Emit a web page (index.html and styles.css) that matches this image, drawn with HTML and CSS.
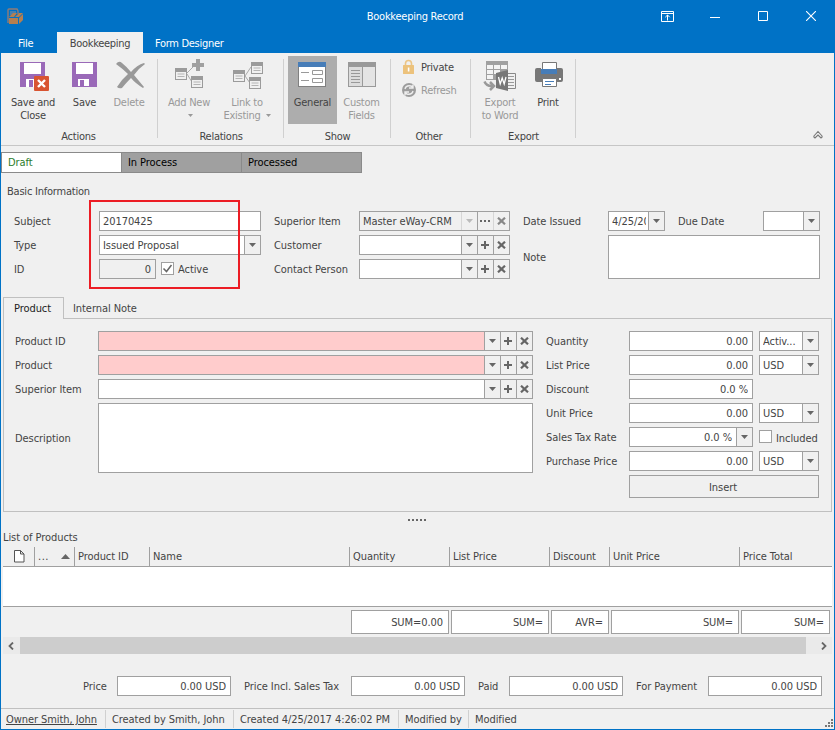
FILE: index.html
```html
<!DOCTYPE html>
<html lang="en">
<head>
<meta charset="utf-8">
<title>Bookkeeping Record</title>
<link rel="stylesheet" href="styles.css">
</head>
<body>
<svg class="defs" width="0" height="0">
  <symbol id="down" viewBox="0 0 7 4"><path d="M0 0h7L3.5 4z" fill="currentColor"/></symbol>
  <symbol id="plus" viewBox="0 0 9 8"><path d="M4 0v8M0 4h8" stroke="currentColor" stroke-width="2"/></symbol>
  <symbol id="cross" viewBox="0 0 9 8"><path d="M1 .7l7 6.600M8 .7l-7 6.600" stroke="currentColor" stroke-width="2.200"/></symbol>
  <symbol id="dots" viewBox="0 0 11 2"><path d="M0 0h2v2H0zM4 0h2v2h-2zM8 0h2v2H8z" fill="currentColor"/></symbol>
  <symbol id="win" viewBox="0 0 13 13"><path d="M0 0h12v12H0z" fill="#9b9b9b"/><path d="M1 4h10v7H1z" fill="#f0f0f0"/><path d="M2.500 6h7M2.500 8.500h7" stroke="#b4b4b4"/></symbol>
</svg>
<div class="window">
  <header class="titlebar">
    <svg class="app" width="18" height="18" viewBox="6 7 18 18"><path d="M8 23V10q0-1 1-1h8l1 2v3" fill="none" stroke="#8f7c78" stroke-width="1.400"/><path d="M10 12h6M10 14h4" stroke="#5f86a8" stroke-width="1.500"/><path d="M9 17l4-4h4l-3 4zM15 17l4-4h4l-4 4zM9 18h9v6H9zM19 18l4-4v6l-4 4z" fill="#b57f50"/></svg>
    <h1>Bookkeeping Record</h1>
    <div class="controls">
      <svg width="13" height="11" viewBox="0 0 13 11" fill="none" stroke="#fff"><path d="M.5.5h12v10H.5zM.5 2.500h12M6.500 9.500V4M4.300 6.200L6.500 4l2.200 2.200"/></svg>
      <svg width="10" height="11" viewBox="0 0 10 11"><path d="M0 6.500h10" stroke="#fff"/></svg>
      <svg width="10" height="10" viewBox="0 0 10 10"><path d="M.5.5h9v9h-9z" stroke="#fff" fill="none"/></svg>
      <svg width="10" height="10" viewBox="0 0 10 10"><path d="M0 0l10 10M10 0L0 10" stroke="#fff" stroke-width="1.100"/></svg>
    </div>
  </header>
  <nav class="tabs"><a class="file">File</a><a class="on">Bookkeeping</a><a class="designer">Form Designer</a></nav>

  <section class="ribbon">
    <div class="group actions">
      <div class="tools">
        <div class="tool w60"><svg viewBox="17 59 34 34"><path d="M21 62h25v25H21z" fill="#9a69b8"/><path d="M25 63h17v11H25zM27 79h13v8H27z" fill="#fff"/><path d="M30 80h4v7h-4z" fill="#9a69b8"/><rect x="35" y="76" width="15" height="15" rx="1" fill="#d85431"/><path d="M39 80l7 7M46 80l-7 7" stroke="#fff" stroke-width="2.400"/></svg><span>Save and</span><span>Close</span></div>
        <div class="tool w43"><svg viewBox="69 59 34 34"><path d="M73 62h25v25H73z" fill="#9a69b8"/><path d="M77 63h17v11H77zM79 79h11v7H79z" fill="#fff"/><path d="M81 80h4v6h-4z" fill="#9a69b8"/></svg><span>Save</span></div>
        <div class="tool w46 off"><svg viewBox="113 59 34 34"><path d="M117 64q3-4 6-1 5 4 9 9 6-7 13-9l1 1q-6 4-11 11 5 6 10 12l-1 1q-8-5-12-10-5 5-9 10-3 1-5-1 4-7 11-13-5-5-12-10z" fill="#999"/></svg><span>Delete</span></div>
      </div><div class="caption">Actions</div>
    </div>
    <div class="group relations">
      <div class="tools">
        <div class="tool w54 off"><svg viewBox="172 59 34 34"><path d="M187 73l7-7M187 74l5 8" stroke="#aaa"/><path d="M196 59h4v4h4v4h-4v4h-4v-4h-4v-4h4z" fill="#a0a0a0"/><use href="#win" x="175" y="68" width="13" height="13"/><use href="#win" x="191" y="76" width="13" height="13"/></svg><span>Add New</span><span><svg class="tri"><use href="#down"/></svg></span></div>
        <div class="tool w62 off"><svg viewBox="230 59 34 34"><path d="M245 76l6-9M245 76l5 7" stroke="#aaa"/><use href="#win" x="233" y="70" width="13" height="13"/><use href="#win" x="251" y="62" width="13" height="13"/><use href="#win" x="249" y="77" width="13" height="13"/></svg><span>Link to</span><span>Existing <svg class="tri"><use href="#down"/></svg></span></div>
      </div><div class="caption">Relations</div>
    </div>
    <div class="group show">
      <div class="tools">
        <div class="tool w49 selected"><svg viewBox="296 59 34 34"><path d="M298 62h28v25h-28z" fill="#808080"/><path d="M298 62h28v5h-28z" fill="#477db8"/><path d="M299 67h26v19h-26z" fill="#fff"/><path d="M301 72.500h8M301 80.500h8" stroke="#999"/><path d="M312.500 70.500h10v4h-10zM312.500 78.500h10v4h-10z" fill="none" stroke="#999"/></svg><span>General</span></div>
        <div class="tool w49 off"><svg viewBox="345 59 34 34"><path d="M348 62h28v25h-28z" fill="#999"/><path d="M349 67h13v19h-13z" fill="#dcdcdc"/><path d="M363 67h12v19h-12z" fill="#e4e4e4"/><path d="M351 70.500h9M351 73.500h9M351 76.500h9M351 79.500h9M351 82.500h9" stroke="#999"/></svg><span>Custom</span><span>Fields</span></div>
      </div><div class="caption">Show</div>
    </div>
    <div class="group other">
      <div class="tools list">
        <div class="item"><svg width="16" height="16" viewBox="400 59 16 16"><path d="M405.500 66v-2.500a3 3 0 0 1 6 0V66" fill="none" stroke="#ecc585" stroke-width="1.600"/><rect x="403" y="65" width="11" height="9" rx=".5" fill="#ecc27c"/><path d="M407.800 67.500h1.600v4h-1.600z" fill="#fff"/></svg>Private</div>
        <div class="item off"><svg width="16" height="16" viewBox="400 82 16 16"><circle cx="409" cy="90" r="7" fill="#9d9d9d"/><path d="M405 89q1-4 6-3l2 1M413 91q-1 4-6 3l-2-1M413 84.500v3.500h-4M405 95.500V92h4" stroke="#eee" stroke-width="1.400" fill="none"/></svg>Refresh</div>
      </div><div class="caption">Other</div>
    </div>
    <div class="group export">
      <div class="tools">
        <div class="tool w50 off"><svg viewBox="483 59 34 34"><path d="M486 61h22v19h-22z" fill="#a0a0a0"/><path d="M487 65h6v4h-6zM494 65h6v4h-6zM501 65h6v4h-6zM487 70h6v4h-6zM494 70h6v4h-6zM487 75h6v4h-6z" fill="#f4f4f4"/><path d="M506.500 73.500h9v15h-9z" fill="#f0f0f0" stroke="#888"/><path d="M508 76.500h6M508 79.500h6M508 82.500h6M508 85.500h6" stroke="#999"/><path d="M496 73l12-3v21l-12-3z" fill="#777"/><path d="M498.500 77l1.700 7 2-6 2 6 1.800-7" fill="none" stroke="#fff" stroke-width="1.300"/><path d="M484.500 81.500q2 5 8 4.500M490 82l4 4-4 4" fill="none" stroke="#999" stroke-width="2.500"/></svg><span>Export</span><span>to Word</span></div>
        <div class="tool w46"><svg viewBox="531 59 34 34"><path d="M542.500 62.500h14v10h-14z" fill="#fff" stroke="#777"/><path d="M535 70q0-2 2-2h4v6h16v-6h4q2 0 2 2v10q0 2-2 2h-24q-2 0-2-2z" fill="#777"/><path d="M541 69h16v5h-16z" fill="#477db8"/><path d="M559 78h2v2h-2z" fill="#fff"/><path d="M542.500 78.500h14v8h-14z" fill="#fff" stroke="#777"/><path d="M545 81.500h9M545 84.500h6" stroke="#477db8"/></svg><span>Print</span></div>
      </div><div class="caption">Export</div>
    </div>
    <svg class="collapse" width="12" height="9" viewBox="0 0 12 9"><path d="M1.500 6.500L6 1.500l4.500 5M10.500 6.500L9 8 6 5 3 8 1.500 6.500" fill="none" stroke="#777" stroke-width="1.100"/></svg>
  </section>

  <div class="steps"><div class="now">Draft</div><div>In Process</div><div>Processed</div></div>

  <section class="basic">
    <h2>Basic Information</h2>
    <div class="basicgrid">
      <div class="col c1">
        <label>Subject</label><div class="field"><span>20170425</span></div>
        <label>Type</label><div class="field"><span>Issued Proposal</span><b><svg class="d"><use href="#down"/></svg></b></div>
        <label>ID</label><div class="idrow"><div class="field ro num"><span>0</span></div><i class="check"><svg width="11" height="11" viewBox="0 0 11 11"><path d="M1.500 5.500l3 3 5-6.500" fill="none" stroke="#666" stroke-width="1.500"/></svg></i>Active</div>
      </div>
      <div class="col c2">
        <label>Superior Item</label><div class="field ro"><span>Master eWay-CRM</span><b class="soft"><svg class="d"><use href="#down"/></svg></b><b><svg class="e"><use href="#dots"/></svg></b><b class="faded"><svg class="p"><use href="#cross"/></svg></b></div>
        <label>Customer</label><div class="field"><span></span><b><svg class="d"><use href="#down"/></svg></b><b><svg class="p"><use href="#plus"/></svg></b><b><svg class="p"><use href="#cross"/></svg></b></div>
        <label>Contact Person</label><div class="field"><span></span><b><svg class="d"><use href="#down"/></svg></b><b><svg class="p"><use href="#plus"/></svg></b><b><svg class="p"><use href="#cross"/></svg></b></div>
      </div>
      <div class="col c3">
        <label>Date Issued</label><div class="field"><span>4/25/2017</span><b><svg class="d"><use href="#down"/></svg></b></div><label class="due">Due Date</label><div class="field"><span></span><b><svg class="d"><use href="#down"/></svg></b></div>
        <label class="notelabel">Note</label><div class="area note"></div>
      </div>
    </div>
    <div class="mark"></div>
  </section>

  <div class="pagetabs"><div class="active">Product</div><div class="rest">Internal Note</div></div>
  <section class="panel">
    <div class="col p1">
      <label>Product ID</label><div class="field req"><span></span><b><svg class="d"><use href="#down"/></svg></b><b><svg class="p"><use href="#plus"/></svg></b><b><svg class="p"><use href="#cross"/></svg></b></div>
      <label>Product</label><div class="field req"><span></span><b><svg class="d"><use href="#down"/></svg></b><b><svg class="p"><use href="#plus"/></svg></b><b><svg class="p"><use href="#cross"/></svg></b></div>
      <label>Superior Item</label><div class="field"><span></span><b><svg class="d"><use href="#down"/></svg></b><b><svg class="p"><use href="#plus"/></svg></b><b><svg class="p"><use href="#cross"/></svg></b></div>
      <label class="desc">Description</label><div class="area"></div>
    </div>
    <div class="col p2">
      <label>Quantity</label><div class="field num"><span>0.00</span></div><div class="field"><span>Activ...</span><b><svg class="d"><use href="#down"/></svg></b></div>
      <label>List Price</label><div class="field num"><span>0.00</span></div><div class="field"><span>USD</span><b><svg class="d"><use href="#down"/></svg></b></div>
      <label>Discount</label><div class="field num"><span>0.0 %</span></div><div></div>
      <label>Unit Price</label><div class="field num"><span>0.00</span></div><div class="field"><span>USD</span><b><svg class="d"><use href="#down"/></svg></b></div>
      <label>Sales Tax Rate</label><div class="field num"><span>0.0 %</span><b><svg class="d"><use href="#down"/></svg></b></div><div class="incl"><i class="check"></i><span>Included</span></div>
      <label>Purchase Price</label><div class="field num"><span>0.00</span></div><div class="field"><span>USD</span><b><svg class="d"><use href="#down"/></svg></b></div>
      <button>Insert</button>
    </div>
  </section>
  <div class="splitter"><i></i><i></i><i></i><i></i><i></i></div>

  <section class="products">
    <h2>List of Products</h2>
    <div class="cols"><div><svg class="doc" width="11" height="13" viewBox="0 0 11 13"><path d="M.5.5h6l3.500 3.500v8H.5zM6.500.5V4H10" fill="#fff" stroke="#555"/></svg></div><div class="sort">...<svg width="9" height="5" viewBox="0 0 9 5"><path d="M0 5h9L4.500 0z" fill="#666"/></svg></div><div>Product ID</div><div>Name</div><div>Quantity</div><div>List Price</div><div>Discount</div><div>Unit Price</div><div>Price Total</div></div>
    <div class="rows"></div>
    <div class="sums"><div>SUM=0.00</div><div>SUM=</div><div>AVR=</div><div>SUM=</div><div>SUM=</div></div>
    <div class="scroll"><svg width="6" height="8" viewBox="0 0 6 8"><path d="M5 .5L1.500 4 5 7.500" fill="none" stroke="#666" stroke-width="1.800"/></svg><i></i><svg width="6" height="8" viewBox="0 0 6 8"><path d="M1 .5L4.500 4 1 7.500" fill="none" stroke="#666" stroke-width="1.800"/></svg></div>
  </section>

  <section class="totals">
    <label>Price</label><div class="field num"><span>0.00 USD</span></div>
    <label>Price Incl. Sales Tax</label><div class="field num"><span>0.00 USD</span></div>
    <label>Paid</label><div class="field num"><span>0.00 USD</span></div>
    <label>For Payment</label><div class="field num"><span>0.00 USD</span></div>
  </section>
  <footer>
    <div><u>Owner Smith, John</u></div><div>Created by Smith, John</div><div>Created 4/25/2017 4:26:02 PM</div><div>Modified by</div><div>Modified</div>
    <svg width="8" height="8" viewBox="0 0 8 8"><path d="M6 0h2v2H6zM3 3h2v2H3zM6 3h2v2H6zM0 6h2v2H0zM3 6h2v2H3zM6 6h2v2H6z" fill="#777"/></svg>
  </footer>
</div>
</body>
</html>
```

FILE: styles.css
```css
* { box-sizing: border-box; }
body { margin: 0; font: 11px/14px "DejaVu Sans Condensed", "DejaVu Sans", sans-serif; font-stretch: condensed; letter-spacing: -0.07px; color: #444; }
h1, h2 { margin: 0; font-size: 11px; font-weight: normal; }
svg { display: block; }
i, b { font-style: normal; font-weight: normal; }
.defs { position: absolute; }
.window { width: 835px; height: 730px; background: #f0f0f0; border: 1px solid #0072c6; border-top: 0; overflow: hidden; }

.titlebar { height: 32px; background: #0072c6; color: #fff; display: grid; grid-template-columns: 190px 1fr 190px; align-items: center; letter-spacing: -0.25px; }
.titlebar h1 { text-align: center; padding: 2px 5px 0 0; }
.app { margin-left: 5px; }
.controls { display: grid; grid-template-columns: 49px 48px 48px 10px; align-items: center; padding-left: 17px; }
.tabs { height: 21px; background: #0072c6; color: #fff; display: flex; line-height: 24px; letter-spacing: -0.3px; }
.tabs .file { width: 56px; padding-left: 17px; line-height: 23px; }
.tabs .on { width: 86px; text-align: center; background: #f0f0f0; color: #444; }
.designer { padding-left: 12px; }

.ribbon { height: 93px; border-bottom: 1px solid #c6c6c6; display: flex; letter-spacing: -0.25px; }
.group { padding-top: 3px; height: 85px; display: flex; flex-direction: column; justify-content: space-between; position: relative; }
.group::after { content: ""; position: absolute; right: 0; top: 6px; bottom: 0; width: 1px; background: #d0d0d0; }
.actions { width: 157px; padding-left: 2px; }
.relations { width: 126px; padding-left: 4px; }
.show { width: 107px; padding-left: 4px; }
.other { width: 80px; }
.export { width: 105px; padding-left: 4px; }
.tools { display: flex; height: 68px; }
.tool { display: flex; flex-direction: column; align-items: center; padding-top: 3px; line-height: 13px; white-space: nowrap; }
.tool > svg { width: 34px; height: 34px; margin-bottom: 3px; flex: none; }
.tool span { height: 13px; }
.w43 { width: 43px; }
.w46 { width: 46px; }
.w49 { width: 49px; }
.w50 { width: 50px; }
.w54 { width: 54px; }
.w60 { width: 60px; }
.w62 { width: 62px; }
.off { color: #999; }
.selected { background: #adadad; }
.tri { display: inline-block; width: 5px; height: 3px; vertical-align: 2px; margin-left: 2px; }
.caption { text-align: center; line-height: 14px; margin: 0 4px -6px 0; }
.list { display: block; padding: 3px 0 0 9px; }
.item { height: 23px; display: flex; gap: 5px; line-height: 17px; }
.collapse { margin: 77px 10px 0 auto; }

.steps { width: 361px; height: 21px; margin-top: 6px; display: grid; grid-template-columns: 119px 120px 120px; background: #a0a0a0; border: 1px solid #8a8a8a; color: #000; line-height: 19px; }
.steps div { padding-left: 6px; border-left: 1px solid #8a8a8a; }
.steps .now { background: #fff; color: #2d7d2d; border-left: 0; }

.basic { position: relative; height: 124px; padding-top: 11px; }
.basic h2 { padding-left: 6px; height: 27px; line-height: 15px; letter-spacing: -0.22px; }
.basicgrid { display: flex; }
.col { display: grid; row-gap: 4px; }
label { line-height: 22px; white-space: nowrap; }
.c1 { grid-template-columns: 85px 162px; margin-left: 13px; grid-template-rows: 20px 20px 20px; }
.c2 { grid-template-columns: 85px 151px; margin-left: 13px; grid-template-rows: 20px 20px 20px; }
.c3 { grid-template-columns: 85px 57px 98px 57px; margin-left: 13px; grid-template-rows: 20px 44px; }
.due { padding-left: 13px; }
.note { grid-column: 2 / 5; }
.notelabel { line-height: 46px; }
.field { height: 20px; border: 1px solid #a0a0a0; background: #fff; display: flex; line-height: 20px; min-width: 0; }
.field span { flex: 1; min-width: 0; margin: 0 2px 0 3px; overflow: hidden; white-space: nowrap; }
.field b { width: 16px; height: 18px; flex: none; border-left: 1px solid #a0a0a0; background: #f0f0f0; display: flex; align-items: center; justify-content: center; color: #666; }
.num { text-align: right; }
.num span { margin-right: 4px; }
.ro { background: #f0f0f0; }
.field .soft { border-color: #d6d6d6; color: #bbb; }
.field .faded { border-color: #d6d6d6; color: #888; }
.req { background: #fcc; }
.area { background: #fff; border: 1px solid #a0a0a0; }
.d { width: 7px; height: 4px; }
.p { width: 9px; height: 8px; }
.e { width: 11px; height: 2px; }
.idrow { display: flex; line-height: 22px; }
.idrow .field { width: 57px; margin-right: 5px; }
.check { width: 13px; height: 13px; border: 1px solid #a0a0a0; background: #fff; margin: 3px 4px 0 0; flex: none; }
.mark { position: absolute; left: 88px; top: 27px; width: 151px; height: 89px; border: 2px solid #ec1c24; }

.pagetabs { display: flex; height: 21px; margin-left: 2px; position: relative; z-index: 1; line-height: 23px; }
.pagetabs .active { width: 61px; height: 22px; border: 1px solid #c0c0c0; border-bottom: 0; padding-left: 10px; background: #f0f0f0; color: #222; line-height: 21px; }
.rest { padding-left: 9px; }
.panel { margin-left: 2px; width: 829px; height: 194px; border: 1px solid #c0c0c0; padding-top: 12px; display: flex; align-items: flex-start; }
.p1 { margin-left: 11px; grid-template-columns: 83px 435px; grid-template-rows: 20px 20px 20px 70px; }
.desc { line-height: 72px; }
.p2 { margin-left: 13px; grid-template-columns: 83px 124px 66px; grid-template-rows: repeat(6, 20px) 23px; }
.p2 > :nth-child(3n) { margin-left: 6px; }
.incl { display: flex; line-height: 23px; }
button { grid-column: 2 / 4; font: inherit; letter-spacing: inherit; color: inherit; background: #f0f0f0; border: 1px solid #a0a0a0; padding: 2px 2px 0 0; width: 190px; }
.splitter { display: flex; gap: 2px; height: 18px; padding: 7px 0 0 407px; }
.splitter i { width: 2px; height: 2px; background: #666; }

.products { margin-left: 2px; width: 829px; }
.products h2 { height: 17px; line-height: 16px; }
.cols { height: 20px; border-bottom: 1px solid #a0a0a0; display: grid; grid-template-columns: 31px 40px 75px 200px 100px 100px 60px 130px 93px; line-height: 20px; }
.cols div { height: 19px; }
.cols div + div { border-left: 1px solid #a0a0a0; padding-left: 3px; }
.doc { margin: 3px 0 0 11px; }
.cols .sort { display: flex; align-items: center; justify-content: space-between; padding-right: 4px; letter-spacing: 0.5px; }
.rows { height: 40px; background: #fff; border-bottom: 1px solid #a0a0a0; }
.sums { display: grid; grid-template-columns: 98px 98px 58px 128px 89px; gap: 2px; margin: 3px 0 3px 348px; }
.sums div { height: 24px; border: 1px solid #a0a0a0; background: #fff; text-align: right; line-height: 23px; padding-right: 5px; }
.scroll { height: 17px; display: flex; align-items: center; background: #eaeaea; }
.scroll i { width: 786px; height: 17px; background: #cdcdcd; margin: 0 15px 0 6px; }
.scroll svg:first-child { margin-left: 5px; }

.totals { display: grid; grid-template-columns: 34px 114px 13px 107px 114px 13px 31px 114px 13px 72px 114px; margin: 22px 0 0 82px; height: 32px; }
.totals label:nth-of-type(n+2) { grid-column: span 2; padding-left: 13px; }
footer { border-top: 1px solid #c0c0c0; height: 21px; display: flex; padding-top: 1px; white-space: nowrap; }
footer div { border-left: 1px solid #d0d0d0; padding-left: 6px; height: 18px; line-height: 20px; }
footer div:first-child { border: 0; width: 104px; padding-left: 5px; }
footer div:nth-child(2) { width: 128px; }
footer div:nth-child(3) { width: 165px; }
footer div:nth-child(4) { width: 70px; }
footer svg { margin: 9px 1px 0 auto; }
```
